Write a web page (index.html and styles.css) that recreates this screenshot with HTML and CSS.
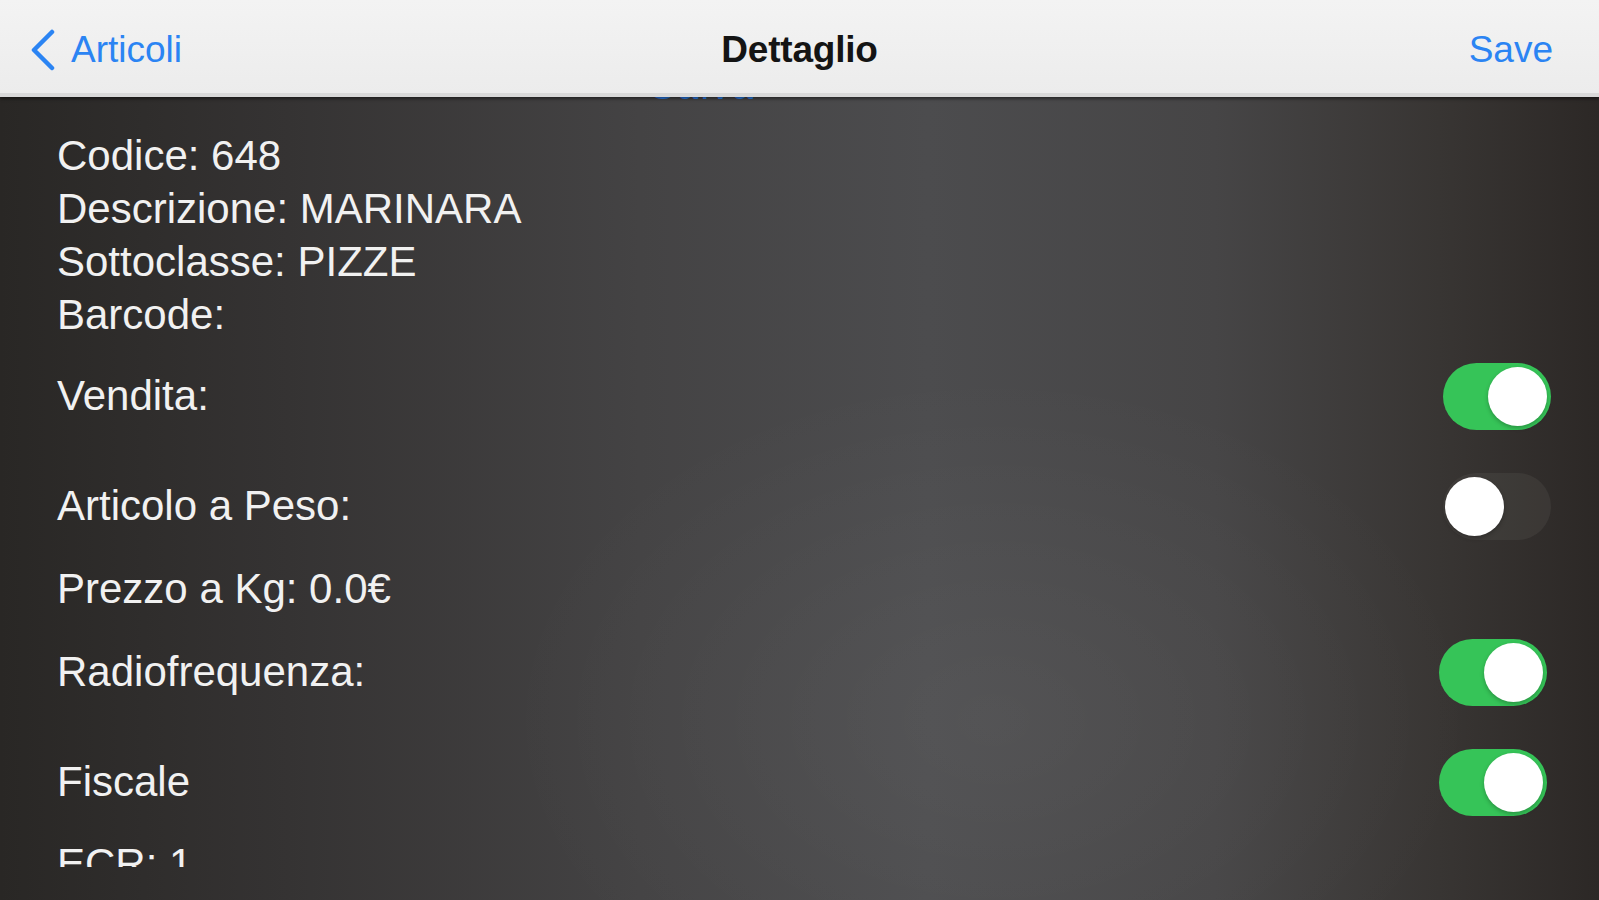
FILE: index.html
```html
<!DOCTYPE html>
<html>
<head>
  <title>Dettaglio</title>
  <link rel="stylesheet" href="styles.css">
</head>
<body>
  <div class="screen">
    <header class="navbar">
      <a class="nav-back" href="#">
        <svg class="chevron" width="24" height="42" viewBox="0 0 24 42">
          <polyline points="21,3 3,21 21,39" fill="none" stroke="currentColor" stroke-width="4.5" stroke-linecap="round" stroke-linejoin="round"/>
        </svg>
        <span>Articoli</span>
      </a>
      <h1 class="nav-title">Dettaglio</h1>
      <a class="nav-action" href="#">Save</a>
    </header>
    <span class="peek">Salva</span>

    <main class="detail">
      <div class="info">
        <div class="line">Codice: 648</div>
        <div class="line">Descrizione: MARINARA</div>
        <div class="line">Sottoclasse: PIZZE</div>
        <div class="line">Barcode:</div>
      </div>

      <div class="switch-row">
        <span>Vendita:</span>
        <span class="toggle on"><span class="knob"></span></span>
      </div>
      <div class="switch-row">
        <span>Articolo a Peso:</span>
        <span class="toggle"><span class="knob"></span></span>
      </div>
      <div class="line price">Prezzo a Kg: 0.0€</div>
      <div class="switch-row shifted">
        <span>Radiofrequenza:</span>
        <span class="toggle on"><span class="knob"></span></span>
      </div>
      <div class="switch-row shifted">
        <span>Fiscale</span>
        <span class="toggle on"><span class="knob"></span></span>
      </div>
      <div class="line">ECR: 1</div>
    </main>
  </div>
</body>
</html>
```

FILE: styles.css
```css
html, body {
  margin: 0;
  padding: 0;
}
body {
  font-family: 'Liberation Sans', Arial, sans-serif;
  background-color: #333;
}
.screen {
  position: relative;
  height: 900px;
  overflow: hidden;
  background:
    radial-gradient(ellipse 700px 500px at 62% 80%, rgba(255, 255, 255, 0.05), rgba(255, 255, 255, 0) 70%),
    linear-gradient(90deg, #292725 0%, #353333 18%, #444344 40%, #4c4c4e 58%, #464546 76%, #383533 90%, #2c2826 100%);
}
.navbar {
  position: relative;
  z-index: 2;
  height: 97px;
  box-sizing: border-box;
  padding: 6px 46px 0 46px;
  display: grid;
  grid-template-columns: 1fr auto 1fr;
  align-items: center;
  background: linear-gradient(180deg, #f3f3f3 0%, #ececec 100%);
  border-bottom: 4px solid #d9d9d9;
  box-shadow: 0 2px 3px rgba(0, 0, 0, 0.45);
}
.nav-back, .nav-action {
  color: #2b84f3;
  text-decoration: none;
  font-size: 37px;
}
.nav-back {
  display: flex;
  align-items: center;
  gap: 16px;
  margin-left: -15px;
}
.chevron {
  display: block;
}
.nav-title {
  margin: 0;
  font-size: 37px;
  font-weight: 700;
  color: #141414;
  letter-spacing: -0.2px;
}
.nav-action {
  text-align: right;
}
.peek {
  position: absolute;
  z-index: 1;
  top: 65px;
  left: 650px;
  font-size: 38px;
  color: #2b7fee;
  letter-spacing: 2px;
}
.detail {
  height: 770px;
  overflow: hidden;
  box-sizing: border-box;
  padding: 32px 48px 0 57px;
  color: #f1f1f1;
  font-size: 42px;
}
.line {
  height: 53px;
  line-height: 53px;
  white-space: nowrap;
}
.price {
  height: 56px;
  line-height: 56px;
}
.switch-row {
  height: 110px;
  display: flex;
  align-items: center;
  justify-content: space-between;
}
.switch-row.shifted {
  padding-right: 4px;
}
.toggle {
  position: relative;
  width: 108px;
  height: 67px;
  border-radius: 34px;
  background-color: rgba(130, 125, 122, 0.14);
}
.toggle.on {
  background-color: #36c458;
}
.knob {
  position: absolute;
  top: 4px;
  left: 2px;
  width: 59px;
  height: 59px;
  border-radius: 50%;
  background-color: #fff;
  box-shadow: 0 2px 4px rgba(0, 0, 0, 0.25);
}
.toggle.on .knob {
  left: auto;
  right: 4px;
}
```
